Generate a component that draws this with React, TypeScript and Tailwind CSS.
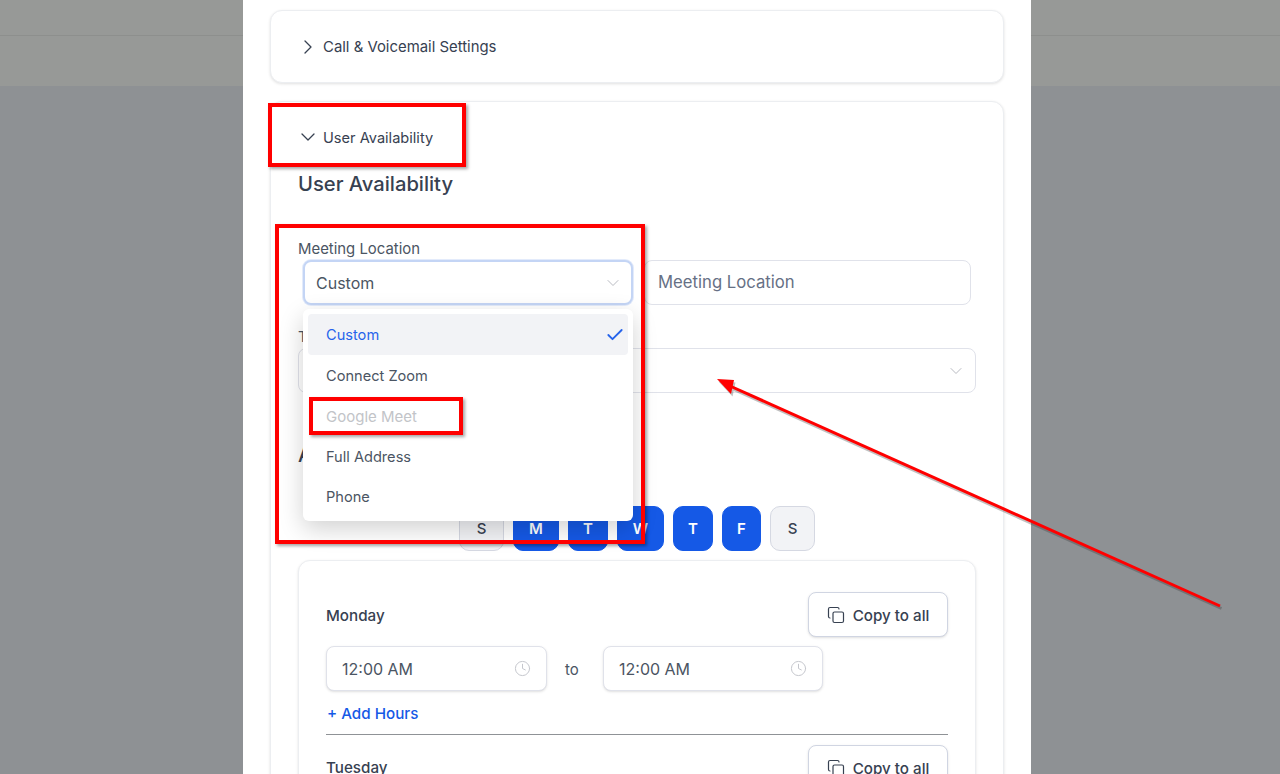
import React from 'react';
import { ChevronDown, ChevronRight, Check, Clock, Copy } from 'lucide-react';

const days = [
  { label: 'S', on: false, width: 'w-[45px]' },
  { label: 'M', on: true, width: 'w-[46px]' },
  { label: 'T', on: true, width: 'w-[40px]' },
  { label: 'W', on: true, width: 'w-[47px]' },
  { label: 'T', on: true, width: 'w-[40px]' },
  { label: 'F', on: true, width: 'w-[39px]' },
  { label: 'S', on: false, width: 'w-[45px]' },
];

const options = ['Connect Zoom', 'Google Meet', 'Full Address', 'Phone'];

const CopyButton = () => (
  <button className="flex h-[45px] w-[140px] items-center justify-center gap-2 rounded-lg border border-[#d0d5e2] bg-white text-[15.2px] font-medium text-[#374151] shadow-sm">
    <Copy className="h-[18px] w-[18px]" strokeWidth={1.6} />
    <span className="pt-[3px]">Copy to all</span>
  </button>
);

const TimeInput = ({ width }: { width: string }) => (
  <div className={`flex h-[45px] ${width} items-center justify-between rounded-lg border border-[#e0e2ea] bg-white pl-[15px] pr-[15px] text-base text-[#4b5563] shadow-sm`}>
    12:00 AM
    <Clock className="h-[17px] w-[17px] text-[#c4c6cc]" strokeWidth={1.4} />
  </div>
);

const Annotations = () => (
  <>
    <div className="absolute left-[268px] top-[103px] h-[64px] w-[198px] border-4 border-[#ff0000] shadow-[2px_2px_3px_rgba(0,0,0,0.35)]" />
    <div className="absolute left-[275px] top-[224px] h-[320px] w-[370px] border-4 border-[#ff0000] shadow-[2px_2px_3px_rgba(0,0,0,0.35)]" />
    <div className="absolute left-[309px] top-[397px] h-[38px] w-[154px] border-4 border-[#ff0000] shadow-[2px_2px_3px_rgba(0,0,0,0.35)]" />
    <svg className="absolute left-0 top-0" width="1280" height="774" viewBox="0 0 1280 774">
      <g opacity="0.3" transform="translate(1.5 2.5)">
        <line x1="1220" y1="606" x2="730" y2="386" stroke="#333333" strokeWidth="3" />
        <polygon points="717,379 734,380 731,394" fill="#333333" />
      </g>
      <line x1="1220" y1="606" x2="730" y2="386" stroke="#ff0000" strokeWidth="3" />
      <polygon points="717,379 734,380 731,394" fill="#ff0000" />
    </svg>
  </>
);

export default function App() {
  return (
    <div className="relative h-[774px] w-[1280px] overflow-hidden bg-[#8e9194] font-['Inter',sans-serif]">
      {/* dimmed page behind the modal */}
      <div className="absolute inset-x-0 top-0 h-[86px] bg-[#979997]">
        <div className="mt-[35px] h-px bg-[#8d8f8d]" />
      </div>

      <div className="relative ml-[243px] h-full w-[788px] bg-white px-[27px] pt-2.5">
        <div className="flex h-[73px] items-center gap-[3px] rounded-xl border border-[#eceef1] bg-white pl-[25px] text-[14.9px] text-[#374151] shadow-[0_1px_3px_rgba(0,0,0,0.12)]">
          <ChevronRight className="h-6 w-6" strokeWidth={1.3} />
          <span className="pt-px">Call &amp; Voicemail Settings</span>
        </div>

        <div className="mt-[18px] h-[800px] rounded-xl border border-[#eceef1] bg-white px-[27px] shadow-[0_1px_3px_rgba(0,0,0,0.12)]">
          <div className="-ml-[2px] flex h-[70px] items-center gap-[3px] text-[14.6px] text-[#374151]">
            <ChevronDown className="h-6 w-6" strokeWidth={1.3} />
            <span className="pt-[3px]">User Availability</span>
          </div>

          <h2 className="text-[20.2px] font-medium leading-6 text-[#374151]">User Availability</h2>

          <label className="mt-[41px] block pt-px text-[14.9px] leading-[22px] text-[#4b5563]">Meeting Location</label>
          <div className="flex items-center">
            <div className="ml-[5px] flex h-[45px] w-[330px] items-center justify-between rounded-lg border-2 border-[#c4d5f5] bg-white pl-[11px] pr-[8px] text-base text-[#4b5563] shadow-[0_0_0_1px_#e3ebfb]">
              Custom
              <ChevronDown className="h-5 w-5 text-[#b9bbc2]" strokeWidth={1.2} />
            </div>
            <div className="ml-[11px] flex h-[45px] w-[327px] items-center rounded-lg border border-[#e0e2ea] bg-white pl-[13px] text-[16.7px] text-[#667085]">
              Meeting Location
            </div>
          </div>

          <label className="mt-[21px] block text-[15px] leading-[22px] text-[#4b5563]">Timezone</label>
          <div className="flex h-[45px] w-[678px] items-center justify-end rounded-lg border border-[#e0e2ea] bg-white pr-[9px]">
            <ChevronDown className="h-5 w-5 text-[#b9bbc2]" strokeWidth={1.2} />
          </div>

          <h3 className="mt-[50px] text-xl font-medium leading-6 text-[#374151]">Availability</h3>

          <div className="mt-[39px] flex gap-[9px] pl-[161px]">
            {days.map((day, i) => (
              <div
                key={i}
                className={`flex h-[45px] ${day.width} items-center justify-center rounded-[10px] border pt-px text-[15px] ${
                  day.on
                    ? 'border-[#1559e6] bg-[#1559e6] font-semibold text-white'
                    : 'border-[#d5d8e2] bg-[#f2f3f6] font-medium text-[#374151]'
                }`}
              >
                {day.label}
              </div>
            ))}
          </div>

          <div className="mt-[9px] rounded-xl border border-[#eceef1] bg-white px-[27px] pt-[31px] shadow-sm">
            <div className="flex items-center justify-between">
              <span className="pt-[3px] text-[15.2px] font-medium text-[#374151]">Monday</span>
              <CopyButton />
            </div>
            <div className="mt-[9px] flex items-center">
              <TimeInput width="w-[221px]" />
              <span className="w-14 pr-[6px] pt-[3px] text-center text-[15px] text-[#4b5563]">to</span>
              <TimeInput width="w-[220px]" />
            </div>
            <button className="mt-[11px] block pl-px pt-px text-[15.2px] font-medium leading-[22px] text-[#1559e6]">+ Add Hours</button>
            <div className="mt-[9px] h-px bg-[#8f9296]" />
            <div className="mt-[10px] flex items-center justify-between">
              <span className="pt-[2px] text-[15.2px] font-medium text-[#374151]">Tuesday</span>
              <CopyButton />
            </div>
          </div>
        </div>
      </div>

      {/* open select menu */}
      <div className="absolute left-[303px] top-[309px] w-[330px] rounded-md bg-white px-[5px] pb-[4px] pt-[5px] text-[14.6px] text-[#4b5563] shadow-[0_8px_24px_rgba(0,0,0,0.18)]">
        <div className="flex h-[41px] items-center justify-between rounded bg-[#f2f3f6] pl-[18px] pr-[3px] text-[#2563eb]">
          <span className="pt-[3px]">Custom</span>
          <Check className="h-5 w-5" strokeWidth={2.2} />
        </div>
        {options.map((option) => (
          <div
            key={option}
            className={`flex h-[40.5px] items-center pl-[18px] pt-[3px] ${option === 'Google Meet' ? 'text-[15px] text-[#c2c4c8]' : ''}`}
          >
            {option}
          </div>
        ))}
      </div>

      <Annotations />
    </div>
  );
}
